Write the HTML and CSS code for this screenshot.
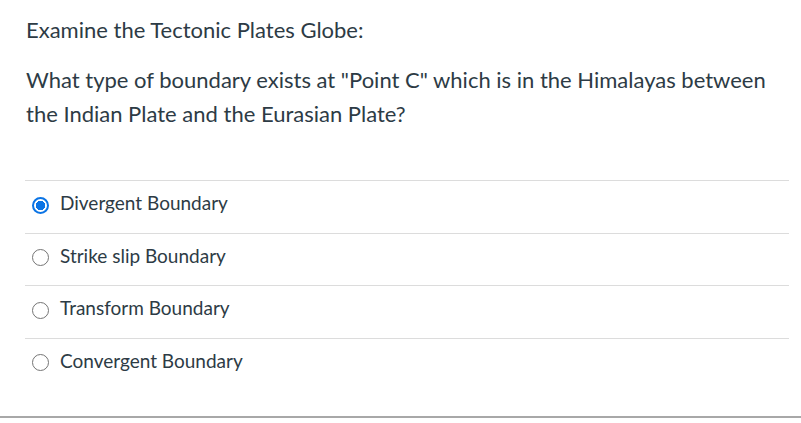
FILE: index.html
```html
<!DOCTYPE html>
<html>
<head>
<meta charset="utf-8">
<link rel="stylesheet" href="styles.css">
</head>
<body>
<div class="question">
  <div class="text">
    <p class="intro">Examine the Tectonic Plates Globe:</p>
    <p class="prompt">What type of boundary exists at "Point C" which is in the Himalayas between the Indian Plate and the Eurasian Plate?</p>
  </div>
  <div class="answers">
    <label class="answer"><span class="radio checked"></span><span class="label">Divergent Boundary</span></label>
    <label class="answer"><span class="radio"></span><span class="label">Strike slip Boundary</span></label>
    <label class="answer"><span class="radio"></span><span class="label">Transform Boundary</span></label>
    <label class="answer"><span class="radio"></span><span class="label">Convergent Boundary</span></label>
  </div>
</div>
<div class="footer"></div>
</body>
</html>
```
FILE: styles.css
```css
html, body {
  margin: 0;
  padding: 0;
  background: #fff;
}
body {
  font-family: Lato, "Liberation Sans", sans-serif;
  color: #2d3b45;
  width: 801px;
  height: 423px;
  overflow: hidden;
}
.question {
  box-sizing: border-box;
  padding: 13px 12px 0 25px;
  height: 416px;
}
.text {
  padding-left: 1px;
  font-size: 22px;
  line-height: 34px;
}
.intro {
  margin: 0;
}
.prompt {
  margin: 16px 0 0 0;
}
.answers {
  margin-top: 49px;
  border-top: 1px solid #dcdcdc;
}
.answer {
  display: flex;
  align-items: center;
  height: 51.5px;
  border-bottom: 1px solid #dcdcdc;
  font-size: 19px;
}
.answer:last-child {
  border-bottom: none;
}
.radio {
  box-sizing: border-box;
  width: 17px;
  height: 17px;
  border-radius: 50%;
  border: 1.5px solid #757575;
  margin-left: 7px;
  margin-right: 11px;
  margin-top: -3px;
  flex: none;
}
.radio.checked {
  border: 2px solid #0b74e5;
  background: radial-gradient(circle, #0b74e5 0 4.5px, #fff 5px);
}
.label {
  padding-bottom: 8px;
}
.footer {
  border-top: 2px solid #a8a8a8;
}
```
